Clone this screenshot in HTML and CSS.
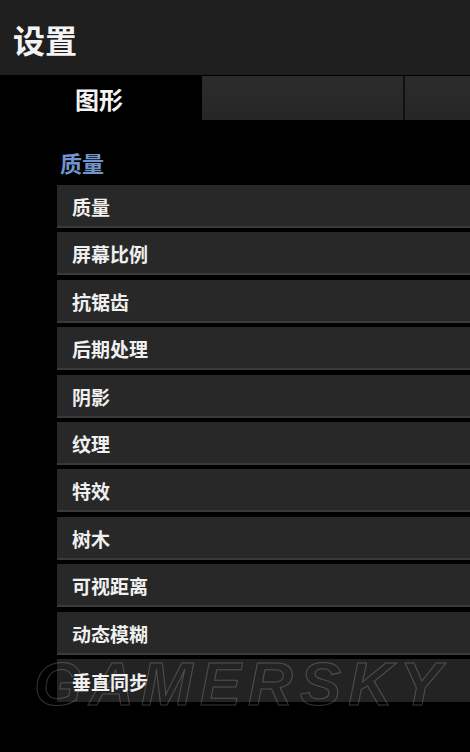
FILE: index.html
```html
<!DOCTYPE html>
<html>
<head>
  <meta charset="utf-8">
  <title>设置</title>
  <link rel="stylesheet" href="styles.css">
</head>
<body>

<div class="topbar">
  <div class="title">设置</div>
</div>

<div class="tabs">
  <div class="tab active">图形</div>
  <div class="tab"></div>
  <div class="tab last"></div>
</div>

<div class="content">
  <div class="section-name">质量</div>
  <div class="list">
    <div class="row">质量</div>
    <div class="row">屏幕比例</div>
    <div class="row">抗锯齿</div>
    <div class="row">后期处理</div>
    <div class="row">阴影</div>
    <div class="row">纹理</div>
    <div class="row">特效</div>
    <div class="row">树木</div>
    <div class="row">可视距离</div>
    <div class="row">动态模糊</div>
    <div class="row last">垂直同步</div>
  </div>
</div>

<div class="watermark">GAMERSKY</div>

</body>
</html>
```

FILE: styles.css
```css
body {
  margin: 0px;
  background-color: #000;
  color: #fff;
  font-family: "Noto Sans CJK SC", "Noto Sans", sans-serif;
  width: 470px;
  height: 752px;
  overflow: hidden;
  position: relative;
}
.topbar {
  height: 75px;
  background-color: #1f1f1f;
  display: flex;
  align-items: center;
  padding-left: 13px;
}
.title {
  font-size: 32px;
  font-weight: 700;
  color: #f4f4f4;
  line-height: 1;
  margin-top: 2px;
}
.tabs {
  display: flex;
  height: 44px;
  margin-top: 1px;
  overflow: hidden;
}
.tab {
  width: 201px;
  background: linear-gradient(#2c2c2c, #262626);
  border-right: 2px solid #111;
  flex-shrink: 0;
}
.tab.last {
  flex: 1;
  width: auto;
  border-right: none;
}
.tab.active {
  background: #000;
  border-right: none;
  width: 202px;
  display: flex;
  align-items: center;
  padding-left: 75px;
  box-sizing: border-box;
  font-size: 24px;
  font-weight: 700;
  color: #f4f4f4;
}
.content {
  padding-left: 57px;
}
.section-name {
  color: #7195cc;
  font-size: 22px;
  font-weight: 700;
  height: 65px;
  display: flex;
  align-items: center;
  padding-left: 3px;
  padding-top: 18px;
  box-sizing: border-box;
}
.list {
  display: flex;
  flex-direction: column;
  gap: 4.4px;
}
.row {
  height: 43px;
  box-sizing: border-box;
  background-color: #282828;
  border-bottom: 2px solid #3a3a3a;
  display: flex;
  align-items: center;
  padding-left: 15px;
  padding-top: 2px;
  font-size: 19px;
  font-weight: 700;
  color: #f0f0f0;
}
.row.last {
  background-color: #232323;
  border-bottom: none;
}
.watermark {
  position: absolute;
  left: 34px;
  top: 648px;
  font-family: "Liberation Sans", Arial, sans-serif;
  font-size: 62px;
  font-weight: 700;
  font-style: italic;
  letter-spacing: 7px;
  color: transparent;
  -webkit-text-stroke: 1px rgba(255, 255, 255, 0.2);
}
```
